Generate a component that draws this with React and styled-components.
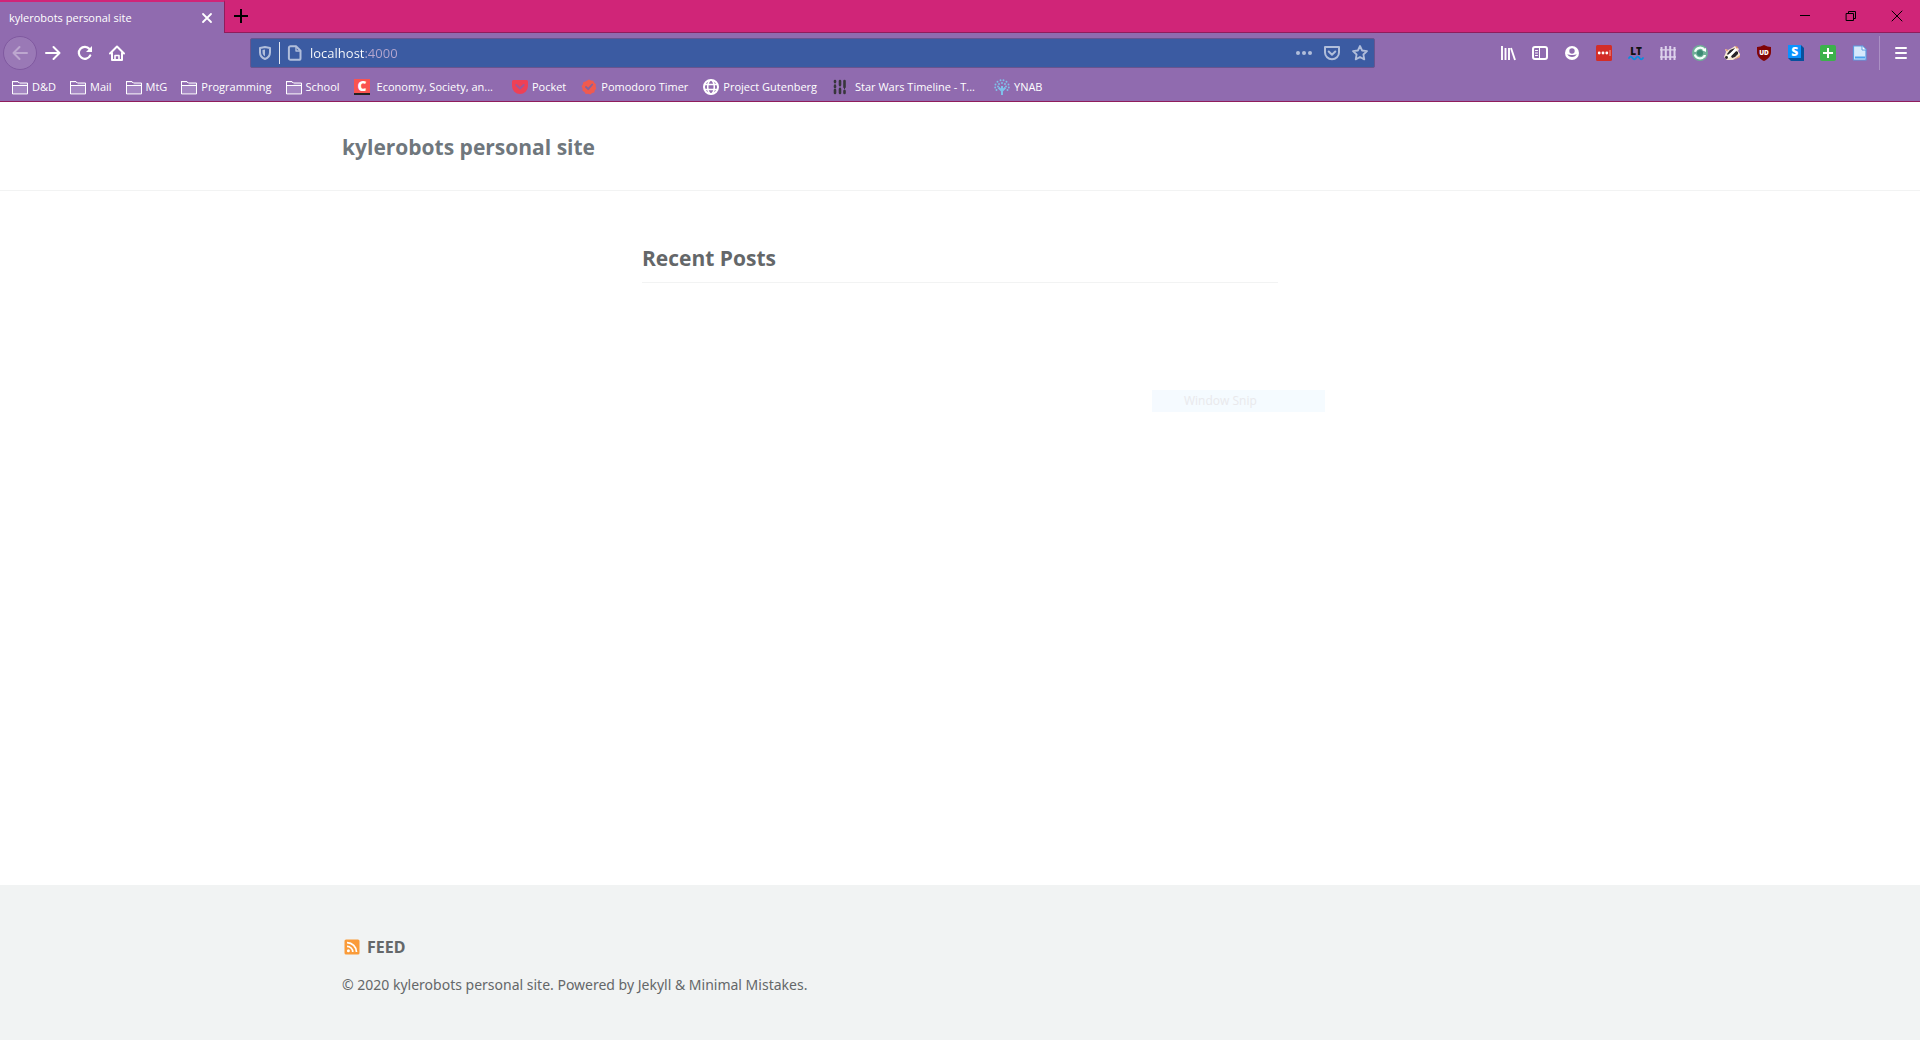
import React from "react";
import styled, { createGlobalStyle } from "styled-components";

const c = {
  pink: "#d02578",
  edge: "#8f1d5c",
  purple: "#906baf",
  field: "#3b5ba2",
  fieldIcon: "#b1bedb",
  text: "#646769",
  title: "#6f777d",
  rule: "#f2f3f3",
};

const GlobalStyle = createGlobalStyle`
  * { box-sizing: border-box; }
  body {
    margin: 0;
    background: #fff;
    font-family: "Open Sans", "Noto Sans", sans-serif;
  }
  button, input { font: inherit; }
`;

const Window = styled.div`
  display: flex;
  flex-direction: column;
  min-height: 100vh;
`;

const Chrome = styled.header`
  background: ${c.purple};
  color: #fff;
  border-bottom: 1px solid ${c.edge};
`;

const TabStrip = styled.div`
  display: flex;
  height: 33px;
  background: ${c.pink};
`;

const Tab = styled.div`
  display: flex;
  align-items: center;
  justify-content: space-between;
  width: 225px;
  padding: 0 7px 0 9px;
  background: ${c.purple};
  border-top: 2px solid ${c.pink};
  border-right: 1px solid ${c.edge};
  font-size: 11px;
  line-height: 16px;
`;

const StripRest = styled.div`
  display: flex;
  flex: 1;
  justify-content: space-between;
  border-bottom: 1px solid ${c.edge};
`;

const WindowControls = styled.div`
  display: flex;
`;

const IconButton = styled.button`
  display: flex;
  align-items: center;
  justify-content: center;
  flex: none;
  width: ${(p) => p.$w || 32}px;
  height: ${(p) => p.$h || 32}px;
  padding: 0;
  border: 0;
  background: none;
  color: inherit;
`;

const StripButton = styled(IconButton)`
  color: #000;
`;

const BackButton = styled(IconButton)`
  height: 34px;
  width: 34px;
  border: 1px solid #8059a0;
  border-radius: 50%;
  background: #9a79b6;
  color: #bda7cf;
`;

const NavBar = styled.nav`
  display: flex;
  align-items: center;
  height: 40px;
  padding: 0 3px;
`;

const Spacer = styled.div`
  flex: 1;
  max-width: 117px;
`;

const UrlBar = styled.form`
  display: flex;
  align-items: center;
  flex: 1;
  height: 30px;
  background: ${c.field};
  border: 1px solid #68548f;
  border-radius: 2px;
  color: ${c.fieldIcon};
`;

const FieldDivider = styled.span`
  width: 1px;
  height: 22px;
  background: #e3e8f2;
`;

const UrlInput = styled.input`
  flex: 1;
  min-width: 0;
  padding: 0;
  border: 0;
  outline: 0;
  font-size: 13px;
  line-height: 20px;
  color: transparent;
  background: linear-gradient(90deg, #fff 55px, #b5a6cf 55px);
  background-clip: text;
  -webkit-background-clip: text;
`;

const Divider = styled.span`
  width: 1px;
  height: 34px;
  margin: 0 5px 0 3px;
  background: #ab8fc4;
`;

const Bookmarks = styled.nav`
  display: flex;
  height: 28px;
  padding: 0 6px;
`;

const bookmarkEnd = { folder: 8, site: 9, wide: 13 };

const Bookmark = styled.a`
  display: flex;
  align-items: center;
  gap: ${(p) => (p.$kind === "wide" ? 7 : 4)}px;
  padding: 0 ${(p) => bookmarkEnd[p.$kind]}px 0 6px;
  color: #fff;
  font-size: 11px;
  line-height: 16px;
  text-decoration: none;
  white-space: nowrap;
`;

const Masthead = styled.header`
  border-bottom: 1px solid ${c.rule};
`;

const Container = styled.div`
  max-width: 1280px;
  margin: 0 auto;
  padding: 0 22px;
`;

const SiteTitle = styled.a`
  display: block;
  padding: 29px 0 27px;
  color: ${c.title};
  font-size: 21px;
  font-weight: 700;
  line-height: 32px;
  text-decoration: none;
`;

const Main = styled.main`
  flex: 1;
  width: 100%;
`;

const Archive = styled.section`
  margin: 0 300px;
  padding-top: 51px;
`;

const Heading = styled.h3`
  margin: 0;
  padding-bottom: 8px;
  border-bottom: 1px solid ${c.rule};
  color: ${c.text};
  font-size: 21px;
  font-weight: 700;
  line-height: 32px;
`;

const SnipMenuItem = styled.div`
  position: absolute;
  top: 390px;
  left: 1152px;
  width: 173px;
  height: 22px;
  padding-left: 32px;
  background: linear-gradient(90deg, #f5faff 28px, #f5fbff 28px);
  color: #e9e9ec;
  font-size: 12px;
  line-height: 22px;
`;

const Footer = styled.footer`
  height: 155px;
  padding-top: 50px;
  background: #f1f3f3;
  color: ${c.text};
  font-family: "Noto Sans", "Open Sans", sans-serif;
`;

const FeedLink = styled.a`
  display: flex;
  align-items: center;
  gap: 7px;
  padding-left: 2px;
  color: inherit;
  font-size: 16px;
  font-weight: 700;
  line-height: 24px;
  text-decoration: none;
`;

const Copyright = styled.p`
  margin: 14px 0 0;
  font-size: 14px;
  line-height: 24px;

  a { color: inherit; text-decoration: none; }
`;

const Svg = ({ children, size = 16, ...rest }) => (
  <svg
    width={size}
    height={size}
    viewBox={`0 0 ${size} ${size}`}
    fill="none"
    stroke="currentColor"
    strokeWidth="2"
    strokeLinecap="round"
    strokeLinejoin="round"
    overflow="visible"
    aria-hidden="true"
    {...rest}
  >
    {children}
  </svg>
);

const letter = { stroke: "none", fontFamily: "Open Sans, sans-serif", fontWeight: 800, textAnchor: "middle" };

const icons = {
  close: <Svg size={12} strokeWidth="1.8"><path d="M2 2l8 8M10 2l-8 8" /></Svg>,
  plus: <Svg strokeLinecap="butt"><path d="M8 1v14M1 8h14" /></Svg>,
  minimize: <Svg strokeWidth="1" strokeLinecap="butt"><path d="M3 7.5h10" /></Svg>,
  restore: <Svg strokeWidth="1" strokeLinejoin="miter"><path d="M3.5 5.500h7v7h-7zM5.500 5.500v-2h7v7h-2" /></Svg>,
  closeWindow: <Svg strokeWidth="1"><path d="M3 3l10 10M13 3L3 13" /></Svg>,
  back: <Svg><path d="M15 8H1.500M7.500 2L1.500 8l6 6" /></Svg>,
  forward: <Svg><path d="M1 8h13.500M8.500 2l6 6-6 6" /></Svg>,
  reload: <Svg strokeWidth="2.200"><path d="M13.200 10.500A6 6 0 1 1 12.500 4" /><path d="M15 1v6H9z" fill="currentColor" stroke="none" /></Svg>,
  home: <Svg><path d="M1 8.500L8 1.500l7 7M3 8v7h10V8" /><path d="M6 15v-4.500h4V15" strokeWidth="1.600" /></Svg>,
  shield: <Svg><path d="M8 2l5 1v4.500C13 10.800 11.200 12.800 8 14 4.800 12.800 3 10.800 3 7.500V3z" /><path d="M8 4.500v6.700C6.300 10.200 5.500 9.300 5.500 7V5z" fill="currentColor" stroke="none" /></Svg>,
  page: <Svg><path d="M3.500 1.200h5.500l4.500 4.500v7.500a1.600 1.600 0 0 1-1.600 1.600H3.500A1.600 1.600 0 0 1 1.900 13.200V2.800a1.600 1.600 0 0 1 1.600-1.600z" /><path d="M9 1.500V6h4.500" strokeWidth="1.400" /></Svg>,
  dots: <Svg fill="currentColor" stroke="none"><circle cx="2" cy="8" r="2" /><circle cx="8" cy="8" r="2" /><circle cx="14" cy="8" r="2" /></Svg>,
  pocketLine: <Svg><path d="M1 2h14v5.500a7 6.700 0 0 1-14 0z" /><path d="M4.700 6.500L8 9.700l3.300-3.200" /></Svg>,
  star: <Svg strokeWidth="1.800"><path d="M8 1l2.100 4.500 4.900.6-3.600 3.400.9 4.900L8 12l-4.300 2.400.9-4.900L1 6.100l4.900-.6z" /></Svg>,
  library: <Svg strokeLinecap="butt"><path d="M2 1v14M5.500 3v12M9 3v12M11 3l4 12" strokeWidth="1.900" /></Svg>,
  sidebar: <Svg><rect x="1" y="2" width="14" height="12" rx="2" /><path d="M7.500 2v12" strokeWidth="1" strokeLinecap="butt" /><path d="M3.500 5.500h2M3.500 8h2M3.500 10.500h2" strokeWidth="1" /></Svg>,
  account: <Svg><circle cx="8" cy="8" r="7" fill="currentColor" stroke="none" /><circle cx="8" cy="6" r="2.700" fill={c.purple} stroke="none" /><path d="M3.300 9c1.200 4 8.200 4 9.400 0-1.500 1.300-7.900 1.300-9.400 0z" fill={c.purple} stroke="none" /></Svg>,
  lastpass: <Svg stroke="none"><rect width="16" height="16" rx="1.500" fill="#d32d27" /><circle cx="3.200" cy="8" r="1.400" fill="#fff" /><circle cx="7" cy="8" r="1.400" fill="#fff" /><circle cx="10.800" cy="8" r="1.400" fill="#fff" /><path d="M13.500 5h1v6h-1z" fill="#f0a09c" /></Svg>,
  languageTool: <Svg><text x="8" y="10" fontSize="10" fill="#111" {...letter}>LT</text><path d="M1 13q1.700-2.600 3.500 0t3.500 0 3.500 0 3.500 0" stroke="#0a8ede" strokeWidth="1.800" /></Svg>,
  fence: <Svg stroke="#ddd2ec" strokeLinecap="butt"><path d="M1.500 2v13M5.800 1v14M10.200 1v14M14.500 2v13" strokeWidth="2" /><path d="M0 4.800h16M0 12h16" strokeWidth="1.300" /></Svg>,
  recycle: <Svg stroke="none"><circle cx="8" cy="8" r="8" fill="#6faf98" /><path d="M12.600 5.200A5.300 5.300 0 0 0 3 6.700M2.800 9.500a5.300 5.300 0 0 0 9.300 1.800" stroke="#f2fff8" strokeWidth="2.200" fill="none" strokeLinecap="butt" /><circle cx="8" cy="8" r="3" fill="#3b8b73" /><path d="M10 5l4-2v4zM11 10l3 0-1 3z" fill="#fff" /></Svg>,
  badger: <Svg stroke="none"><path d="M0 12L2 7 1 4l3 1 4-2 3-2 1.500 1L15 4l-1 2 2 3v3l-4 1-3 2H3z" fill="#f4e6d2" /><path d="M3 9l3-4 5-2-4 5-3 2zM7 11l5-5 2 1 0 2-3 3-3 1z" fill="#27232a" /><path d="M2 12l2-2 8-7 1 2-6 6-2 2z" fill="#fff" /><circle cx="2.500" cy="12.500" r="1.400" fill="#222" /><path d="M11 1l3 1-1 2zM1 4l3 1-1 1.500z" fill="#e4935c" /><path d="M10 15l6-3v-2l-4 3z" fill="#e8a56f" /></Svg>,
  ublock: <Svg stroke="none"><path d="M8 0q3.500 2 7 2v5c0 4-2.500 7-7 9C3.500 14 1 11 1 7V2q3.500 0 7-2z" fill="#800405" /><text x="8" y="9.700" fontSize="6.500" fill="#fff" {...letter}>UD</text></Svg>,
  stylish: <Svg stroke="none"><path d="M0 0h13l3 3v13H3l-3-3z" fill="#07519d" /><path d="M0 0h13v13H0z" fill="#0b92ff" /><text x="6.800" y="11" fontSize="12" fill="#fff" {...letter}>S</text></Svg>,
  add: <Svg><rect width="16" height="16" rx="2" fill="#3cb14b" stroke="none" /><path d="M8 3v10M3 8h10" stroke="#fff" strokeLinecap="butt" /></Svg>,
  note: <Svg><path d="M1.500 1h9L14 4.500V15H1.500z" fill="#d6eafc" stroke="#5c9be0" strokeWidth="1.200" /><path d="M10 1v4h4" fill="#fff" stroke="#5c9be0" strokeWidth="1" /><path d="M3 12.500h10" stroke="#4ca3ee" strokeWidth="2" strokeLinecap="butt" /></Svg>,
  menu: <Svg><path d="M3 3h10M3 8h10M3 13h10" /></Svg>,
  folder: <Svg strokeWidth="1"><path d="M.5 14.500v-12h5.500l1 1.500h8.500v10.500z" fill="#a486c2" /><path d="M.5 4h7v2H.5z" fill={c.purple} stroke="none" /><path d="M.5 6.500h15M.5 2.500v12" /></Svg>,
  coursera: <Svg stroke="none"><path d="M0 0h16v14H0z" fill="#fa5350" /><path d="M0 14h16v2H0z" fill="#222" /><text x="8" y="12" fontSize="14" fill="#fff" {...letter}>C</text></Svg>,
  pocket: <Svg stroke="none"><path d="M1.500 1h13A1.500 1.500 0 0 1 16 2.500V7A8 8 0 0 1 0 7V2.500A1.500 1.500 0 0 1 1.500 1z" fill="#ee4056" /><path d="M4.300 6L8 9.500 11.700 6" stroke="#a05599" fill="none" strokeWidth="2" /></Svg>,
  pomodoro: <Svg stroke="none"><path d="M8 .5l2 1 2.200.2 1 2 1.700 1.500-.3 2.300.7 2.200-1.500 1.600-.5 2.300-2.200.5-1.700 1.400L7 14.800l-2.300.1-1.200-1.800-2-1.300.1-2.300L.5 7.300l1.300-1.800.4-2.300 2.300-.6z" fill="#f05a4f" /><path d="M5 8l2.200 2.200 4-4.700" stroke="#8064a1" fill="none" strokeWidth="1.800" /></Svg>,
  globe: <Svg strokeWidth="1.600"><circle cx="8" cy="8" r="7" strokeWidth="2" /><ellipse cx="8" cy="8" rx="3.300" ry="7" /><path d="M2 5.500h12M2 10.500h12" /></Svg>,
  timeline: <Svg stroke="#38363c" strokeWidth="2.600"><path d="M3 2v1M3 7v1M3 11v3M8 2v4M8 10v4M12.500 2v6M12.500 12v2" /><path d="M3 2v9M8 3v10M12.500 3v10" strokeWidth="1" strokeDasharray="1 2" /></Svg>,
  tree: <Svg stroke="#7fc0ea"><path d="M8 16V7M8 12L4.500 8.500M8 12l3.500-3.500" strokeLinecap="butt" strokeWidth="2" /><path d="M1.500 5.500h0M1.200 8.500h0M2.500 11h0M3.500 2.800h0M6.500 1.200h0M9.500 1.200h0M12.500 2.800h0M14.500 5.500h0M14.800 8.500h0M13.500 11h0M5 5h0M8 4h0M11 5h0M4 7.500h0M12 7.500h0" strokeWidth="1.900" /></Svg>,
  rss: <Svg stroke="none"><rect x=".5" y=".5" width="15" height="15" rx="1.500" fill="#fa9b39" /><circle cx="4.400" cy="11.800" r="1.500" fill="#fff" /><path d="M3 7.300a5.800 5.800 0 0 1 5.800 5.800M3 3.600a9.500 9.500 0 0 1 9.500 9.500" fill="none" stroke="#fff" strokeWidth="1.700" strokeLinecap="butt" /></Svg>,
};

const extensions = [
  ["Library", "library"], ["Sidebars", "sidebar"], ["Account", "account"], ["LastPass", "lastpass"],
  ["LanguageTool", "languageTool"], ["Fence", "fence"], ["Recycle", "recycle"], ["Privacy Badger", "badger"],
  ["uBlock", "ublock"], ["Stylish", "stylish"], ["Add", "add"], ["Notes", "note"],
];

const bookmarks = [
  ["D&D", "folder", "folder"],
  ["Mail", "folder", "folder"],
  ["MtG", "folder", "folder"],
  ["Programming", "folder", "folder"],
  ["School", "folder", "folder"],
  ["Economy, Society, an...", "coursera", "wide"],
  ["Pocket", "pocket", "site"],
  ["Pomodoro Timer", "pomodoro", "site"],
  ["Project Gutenberg", "globe", "site"],
  ["Star Wars Timeline - T...", "timeline", "wide"],
  ["YNAB", "tree", "site"],
];

export default function App() {
  return (
    <Window>
      <GlobalStyle />
      <Chrome>
        <TabStrip>
          <Tab>
            <span>kylerobots personal site</span>
            <IconButton $w={20} $h={20} aria-label="Close tab">{icons.close}</IconButton>
          </Tab>
          <StripRest>
            <StripButton aria-label="New tab">{icons.plus}</StripButton>
            <WindowControls>
              <StripButton $w={46} aria-label="Minimize">{icons.minimize}</StripButton>
              <StripButton $w={46} aria-label="Restore">{icons.restore}</StripButton>
              <StripButton $w={46} aria-label="Close window">{icons.closeWindow}</StripButton>
            </WindowControls>
          </StripRest>
        </TabStrip>
        <NavBar aria-label="Navigation">
          <BackButton aria-label="Back">{icons.back}</BackButton>
          <IconButton aria-label="Forward">{icons.forward}</IconButton>
          <IconButton aria-label="Reload">{icons.reload}</IconButton>
          <IconButton aria-label="Home">{icons.home}</IconButton>
          <Spacer />
          <UrlBar onSubmit={(e) => e.preventDefault()}>
            <IconButton type="button" $w={28} $h={28} aria-label="Protections">{icons.shield}</IconButton>
            <FieldDivider />
            <IconButton type="button" $w={30} $h={28} aria-label="Site information">{icons.page}</IconButton>
            <UrlInput aria-label="Address" defaultValue="localhost:4000" />
            <IconButton type="button" $w={28} $h={28} aria-label="Page actions">{icons.dots}</IconButton>
            <IconButton type="button" $w={28} $h={28} aria-label="Save to Pocket">{icons.pocketLine}</IconButton>
            <IconButton type="button" $w={28} $h={28} aria-label="Bookmark page">{icons.star}</IconButton>
          </UrlBar>
          <Spacer />
          {extensions.map(([name, icon]) => (
            <IconButton key={name} aria-label={name}>{icons[icon]}</IconButton>
          ))}
          <Divider />
          <IconButton aria-label="Menu">{icons.menu}</IconButton>
        </NavBar>
        <Bookmarks aria-label="Bookmarks">
          {bookmarks.map(([name, icon, kind]) => (
            <Bookmark key={name} href="#" $kind={kind}>
              {icons[icon]}
              <span>{name}</span>
            </Bookmark>
          ))}
        </Bookmarks>
      </Chrome>
      <Masthead>
        <Container>
          <SiteTitle href="#">kylerobots personal site</SiteTitle>
        </Container>
      </Masthead>
      <Main>
        <Container>
          <Archive>
            <Heading>Recent Posts</Heading>
          </Archive>
        </Container>
      </Main>
      <Footer>
        <Container>
          <FeedLink href="#">{icons.rss}<span>FEED</span></FeedLink>
          <Copyright>
            © 2020 kylerobots personal site. Powered by <a href="#">Jekyll</a> &amp; <a href="#">Minimal Mistakes</a>.
          </Copyright>
        </Container>
      </Footer>
      <SnipMenuItem>Window Snip</SnipMenuItem>
    </Window>
  );
}
